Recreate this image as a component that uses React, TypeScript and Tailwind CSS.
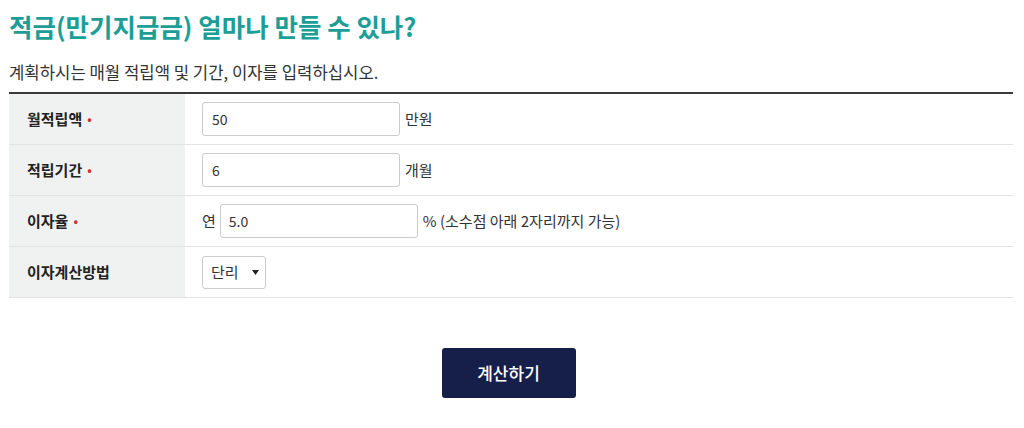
import React from "react";

const Dot = () => <span className="ml-[5px] text-[#d32f2f] text-[12px] align-middle">•</span>;

function Row({ label, req, children }: { label: string; req?: boolean; children: React.ReactNode }) {
  return (
    <div className="flex h-[51px] border-b border-[#e3e3e3]">
      <div className="w-[176px] bg-[#f0f2f1] flex items-center pl-[18px] text-[15px] font-bold text-[#222]">
        {label}
        {req && <Dot />}
      </div>
      <div className="flex-1 flex items-center pl-[17px] text-[15px] text-[#333]">{children}</div>
    </div>
  );
}

export default function App() {
  return (
    <div className="w-[1024px] h-[428px] bg-white px-[9px] pt-[8px]" style={{ fontFamily: '"Noto Sans CJK KR", "Noto Sans", sans-serif' }}>
      <h1 className="text-[25.5px] font-bold text-[#1c9e97] leading-[36px]">적금(만기지급금) 얼마나 만들 수 있나?</h1>
      <p className="mt-[17px] text-[16.7px] text-[#333] leading-[22px]">계획하시는 매월 적립액 및 기간, 이자를 입력하십시오.</p>
      <div className="mt-[9px] w-[1004px] border-t-2 border-[#3a3a3a]">
        <Row label="월적립액" req>
          <input readOnly value="50" className="w-[198px] h-[34px] border border-[#ccc] rounded-[3px] px-[9px] text-[14px] text-[#333] outline-none" />
          <span className="ml-[5px]">만원</span>
        </Row>
        <Row label="적립기간" req>
          <input readOnly value="6" className="w-[198px] h-[34px] border border-[#ccc] rounded-[3px] px-[9px] text-[14px] text-[#333] outline-none" />
          <span className="ml-[5px]">개월</span>
        </Row>
        <Row label="이자율" req>
          <span className="mr-[4px]">연</span>
          <input readOnly value="5.0" className="w-[198px] h-[34px] border border-[#ccc] rounded-[3px] px-[8px] text-[14px] text-[#333] outline-none" />
          <span className="ml-[5px]">% (소수점 아래 2자리까지 가능)</span>
        </Row>
        <Row label="이자계산방법">
          <div className="w-[64px] h-[33px] border border-[#ccc] rounded-[3px] flex items-center pl-[8px] text-[15px] text-[#333]">
            <span>단리</span>
            <svg className="ml-[13px]" width="7" height="5" viewBox="0 0 7 5"><path d="M0 0 L7 0 L3.5 5 Z" fill="#222" /></svg>
          </div>
        </Row>
      </div>
      <div className="w-[1004px] pr-[5px] flex justify-center mt-[50px]">
        <button className="w-[134px] h-[50px] bg-[#161f4a] rounded-[3px] text-white text-[17px] font-medium">계산하기</button>
      </div>
    </div>
  );
}
